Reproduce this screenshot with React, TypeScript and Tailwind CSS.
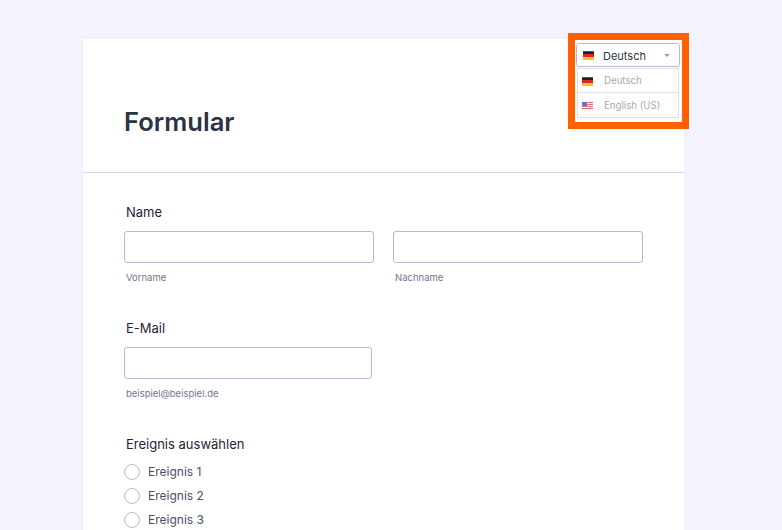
import { ReactNode } from "react";

function FlagDe({ className = "" }: { className?: string }) {
  return (
    <svg viewBox="0 0 11 9" className={className} shapeRendering="crispEdges">
      <rect width="11" height="1" y="0" fill="#555555" />
      <rect width="11" height="2" y="1" fill="#222222" />
      <rect width="11" height="3" y="3" fill="#d8262c" />
      <rect width="11" height="3" y="6" fill="#f5c518" />
    </svg>
  );
}

function FlagUs({ className = "" }: { className?: string }) {
  return (
    <svg viewBox="0 0 11 8" className={className} shapeRendering="crispEdges">
      <rect width="11" height="8" fill="#f0eef2" />
      <rect width="11" height="1" y="0" fill="#d9737c" />
      <rect width="11" height="1" y="2" fill="#d9737c" />
      <rect width="11" height="1" y="4" fill="#d9737c" />
      <rect width="11" height="1" y="6" fill="#d9737c" />
      <rect width="5" height="4" fill="#6f74b8" />
    </svg>
  );
}

function TextInput({ className = "" }: { className?: string }) {
  return (
    <input
      type="text"
      className={`block h-8 rounded-[3px] border border-[#b8bacb] bg-white outline-none ${className}`}
    />
  );
}

function Field({ label, children }: { label: string; children: ReactNode }) {
  return (
    <div>
      <div className="pl-0.5 text-[13px] leading-5 font-normal text-[#1f2536]">{label}</div>
      {children}
    </div>
  );
}

function Hint({ children }: { children: ReactNode }) {
  return <div className="mt-2 pl-0.5 text-[9.5px] leading-[14px] text-[#6f7690]">{children}</div>;
}

function Radio({ label }: { label: string }) {
  return (
    <label className="flex h-6 items-center gap-2">
      <span className="h-4 w-4 rounded-full border border-[#b8bacb] bg-white" />
      <span className="text-[12px] text-[#4a5068]">{label}</span>
    </label>
  );
}

export default function App() {
  return (
    <div className="h-[530px] overflow-hidden bg-[#f3f3fe] pt-[39px] pl-[83px] font-['Inter',sans-serif]">
      <div className="relative w-[601px] bg-white shadow-[0_0_2px_rgba(80,80,140,0.06)]">
        {/* Language picker, highlighted */}
        <div className="absolute top-[-6px] right-[-5px] h-24 w-[121px] border-[7px] border-[#ff6100] bg-white pt-[3px] pl-[1px]">
          <div className="flex h-[24px] w-[104px] items-center rounded-[3px] border border-[#b8bacb] bg-white pr-[9px] pl-[6px] text-[11px] text-[#2c3345]">
            <FlagDe className="h-[9px] w-[11px]" />
            <span className="ml-[9px] flex-1 pt-[2px]">Deutsch</span>
            <span className="mt-[1px] h-0 w-0 border-x-[3px] border-t-[3px] border-x-transparent border-t-[#a0a3b5]" />
          </div>
          <div className="mt-[1px] ml-[1px] w-[102px] border border-[#dfe0e6] text-[9.7px] text-[#a5a8b5]">
            <div className="flex h-6 items-center border-b border-[#dfe0e6] pt-[2px] pl-1">
              <FlagDe className="h-[9px] w-[11px]" />
              <span className="ml-[11px]">Deutsch</span>
            </div>
            <div className="flex h-6 items-center pt-[2px] pl-1">
              <FlagUs className="h-[8px] w-[11px]" />
              <span className="ml-[11px]">English (US)</span>
            </div>
          </div>
        </div>

        <div className="h-[134px] border-b border-[#d8d8e6] pt-[66px] pl-[41px]">
          <h1 className="text-[25.6px] leading-[34px] font-semibold text-[#2c3345]">Formular</h1>
        </div>

        <div className="pt-[29px] pl-[41px]">
          <Field label="Name">
            <div className="mt-[9px] flex gap-[19px]">
              <div>
                <TextInput className="w-[250px]" />
                <Hint>Vorname</Hint>
              </div>
              <div>
                <TextInput className="w-[250px]" />
                <Hint>Nachname</Hint>
              </div>
            </div>
          </Field>

          <div className="mt-[33px]">
            <Field label="E-Mail">
              <TextInput className="mt-[9px] w-[248px]" />
              <Hint>beispiel@beispiel.de</Hint>
            </Field>
          </div>

          <div className="mt-[33px]">
            <Field label="Ereignis auswählen">
              <div className="mt-[6px]">
                <Radio label="Ereignis 1" />
                <Radio label="Ereignis 2" />
                <Radio label="Ereignis 3" />
              </div>
            </Field>
          </div>
        </div>
      </div>
    </div>
  );
}
